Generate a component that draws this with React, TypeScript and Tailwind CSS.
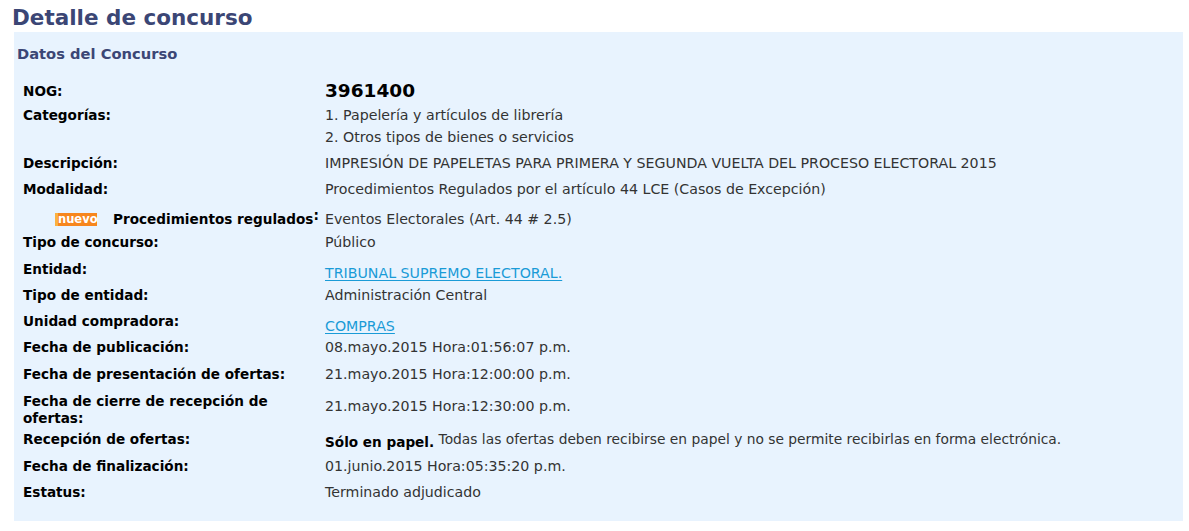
import React from 'react'

type Row = {
  label: React.ReactNode
  value: React.ReactNode
  h: string
  valuePad?: string
}

const font = { fontFamily: '"DejaVu Sans", Verdana, sans-serif' }

function Link({ children }: { children: React.ReactNode }) {
  return <a href="#" className="text-[#1a9bd7] underline underline-offset-2">{children}</a>
}

export default function App() {
  const rows: Row[] = [
    { label: 'NOG:', value: <span className="text-[18.5px] font-bold text-black">3961400</span>, h: 'h-[24px]' },
    {
      label: 'Categorías:',
      value: (
        <>
          <div>1. Papelería y artículos de librería</div>
          <div>2. Otros tipos de bienes o servicios</div>
        </>
      ),
      h: 'h-[48px]',
    },
    { label: 'Descripción:', value: 'IMPRESIÓN DE PAPELETAS PARA PRIMERA Y SEGUNDA VUELTA DEL PROCESO ELECTORAL 2015', h: 'h-[26px]' },
    { label: 'Modalidad:', value: 'Procedimientos Regulados por el artículo 44 LCE (Casos de Excepción)', h: 'h-[30px]' },
    {
      label: (
        <span className="flex items-center pl-[32px]">
          <span className="mr-[16px] inline-block h-[13px] w-[42px] border-l-[3px] border-[#fbb040] bg-[#f7861d] text-center text-[11.5px] leading-[13px] font-bold text-white">
            nuevo
          </span>
          <span className="whitespace-nowrap">
            Procedimientos regulados<span className="relative -top-[4px]">:</span>
          </span>
        </span>
      ),
      value: 'Eventos Electorales (Art. 44 # 2.5)',
      h: 'h-[23px]',
    },
    { label: 'Tipo de concurso:', value: 'Público', h: 'h-[27px]' },
    { label: 'Entidad:', value: <Link>TRIBUNAL SUPREMO ELECTORAL.</Link>, h: 'h-[26px]', valuePad: 'pt-[4px]' },
    { label: 'Tipo de entidad:', value: 'Administración Central', h: 'h-[26px]' },
    { label: 'Unidad compradora:', value: <Link>COMPRAS</Link>, h: 'h-[26px]', valuePad: 'pt-[5px]' },
    { label: 'Fecha de publicación:', value: '08.mayo.2015 Hora:01:56:07 p.m.', h: 'h-[27px]' },
    { label: 'Fecha de presentación de ofertas:', value: '21.mayo.2015 Hora:12:00:00 p.m.', h: 'h-[28px]' },
    {
      label: (
        <span className="block pt-[2px] leading-[17px]">
          Fecha de cierre de recepción de
          <br />
          ofertas:
        </span>
      ),
      value: '21.mayo.2015 Hora:12:30:00 p.m.',
      h: 'h-[37px]',
      valuePad: 'pt-[4px]',
    },
    {
      label: 'Recepción de ofertas:',
      value: (
        <span className="text-[13.8px]">
          <span className="relative top-[3px] text-[13.6px] font-bold text-black">Sólo en papel.</span> Todas las ofertas deben recibirse en papel y no se permite recibirlas en forma electrónica.
        </span>
      ),
      h: 'h-[27px]',
    },
    { label: 'Fecha de finalización:', value: '01.junio.2015 Hora:05:35:20 p.m.', h: 'h-[26px]' },
    { label: 'Estatus:', value: 'Terminado adjudicado', h: 'h-[22px]' },
  ]

  return (
    <div className="min-h-screen bg-white" style={font}>
      <h1 className="pl-[12px] pt-[3px] text-[21.5px] leading-[29px] font-bold text-[#3b4675]">Detalle de concurso</h1>
      <div className="mr-[6px] ml-[14px] bg-[#e8f3fe] pb-[18px]">
        <h2 className="pl-[3px] pt-[12px] text-[14.7px] leading-[20px] font-bold text-[#3b4675]">Datos del Concurso</h2>
        <div className="pt-[16px] pl-[9px]">
          {rows.map((r, i) => (
            <div key={i} className={`flex ${r.h}`}>
              <div className="w-[302px] shrink-0 text-[13.6px] leading-[22px] font-bold text-black">{r.label}</div>
              <div className={`text-[14.2px] leading-[22px] text-[#333] ${r.valuePad ?? ''}`}>{r.value}</div>
            </div>
          ))}
        </div>
      </div>
    </div>
  )
}
